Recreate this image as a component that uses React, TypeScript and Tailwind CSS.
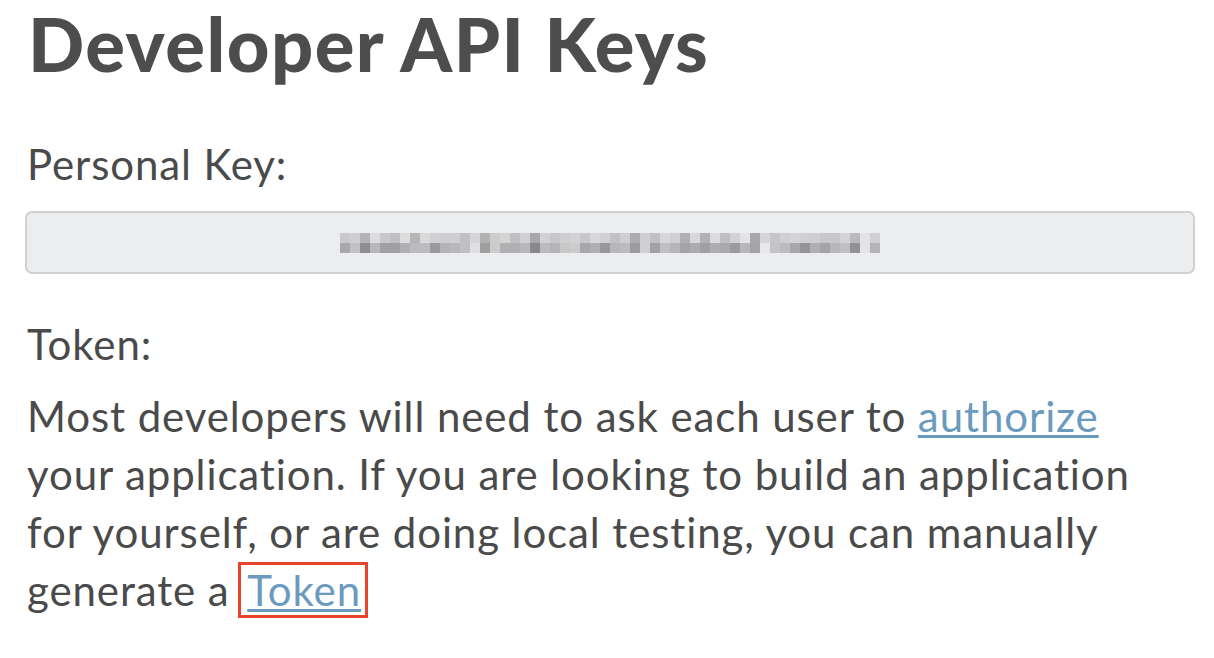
const topRow = [
  "#c9c9cb", "#cfcfd1", "#b2b3b4", "#dcdcde", "#c8c8ca", "#bfc0c1", "#dddddf", "#b5b5b6", "#dadadc",
  "#d0d0d2", "#cfcfd1", "#cfcfd1", "#c0c0c2", "#d6d6d8", "#b2b2b4", "#cccccd", "#d4d4d6", "#c0c0c2",
  "#d1d1d3", "#a8a8aa", "#d2d2d4", "#c8c8ca", "#cecfd0", "#d2d2d4", "#c8c8ca", "#d8d8da", "#d0d0d2",
  "#c2c2c4", "#cecfd0", "#acacae", "#cecfd0", "#c0c0c2", "#d8d8da", "#d0d0d2", "#b0b0b2", "#d8d8da",
  "#b2b2b4", "#dcdcde", "#c0c0c2", "#d2d2d4", "#e4e4e6", "#a8a8aa", "#d6d6d8", "#c6c6c8", "#d0d0d2",
  "#d4d4d6", "#d0d0d2", "#cfcfd1", "#c8c8ca", "#c8c8ca", "#d4d4d6", "#bababc", "#e4e4e6", "#d0d0d2",
];

const bottomRow = [
  "#a8a8aa", "#c2c2c4", "#8e8e90", "#b8b8ba", "#a0a0a2", "#a0a0a2", "#b0b0b2", "#bcbcbe", "#bcbcbe",
  "#9a9a9c", "#b4b4b6", "#b8b8ba", "#c0c0c2", "#e0e0e2", "#9e9ea0", "#cccccd", "#b0b0b2", "#b0b0b2",
  "#b8b8ba", "#88888a", "#bcbcbe", "#b4b4b6", "#c8c8ca", "#cccccd", "#a8a8aa", "#b0b0b2", "#98989a",
  "#b8b8ba", "#bcbcbe", "#9c9c9e", "#d0d0d2", "#a2a2a4", "#c0c0c2", "#b6b6b8", "#a4a4a6", "#acacae",
  "#a0a0a2", "#aeaeb0", "#aaaaac", "#9c9c9e", "#b8b8ba", "#a4a4a6", "#e8e8ea", "#c4c4c6", "#bcbcbe",
  "#a8a8aa", "#949496", "#b0b0b2", "#a4a4a6", "#b8b8ba", "#c0c0c2", "#929294", "#e4e4e6", "#b4b4b6",
];

function BlurredKey() {
  return (
    <div className="flex flex-col">
      <div className="flex">
        {topRow.map((c, i) => (
          <span key={i} className="block w-[10px] h-[10px]" style={{ backgroundColor: c }} />
        ))}
      </div>
      <div className="flex">
        {bottomRow.map((c, i) => (
          <span key={i} className="block w-[10px] h-[10px]" style={{ backgroundColor: c }} />
        ))}
      </div>
    </div>
  );
}

export default function App() {
  return (
    <div
      className="min-h-screen bg-white text-[#4a4a4a] pl-[25px] pr-[19px]"
      style={{ fontFamily: "Lato, 'Noto Sans', sans-serif" }}
    >
      {/* Heading */}
      <h1 className="pt-[7px] text-[74px] leading-[74px] font-black tracking-[1.5px] text-[#4d4d4d] pl-[3px]">
        Developer API Keys
      </h1>

      {/* Personal key */}
      <div className="mt-[54px] text-[42px] leading-[58px] tracking-[0.9px] pl-[2px]">Personal Key:</div>
      <div className="mt-[18px] h-[63px] rounded-[7px] border-2 border-[#d0d1d3] bg-[#ecedef] flex items-center justify-center">
        <BlurredKey />
      </div>

      {/* Token */}
      <div className="mt-[41px] text-[42px] leading-[58px] tracking-[0.9px] pl-[2px]">Token:</div>
      <p className="mt-[14px] text-[42px] leading-[58px] tracking-[0.9px] pl-[2px]">
        Most developers will need to ask each user to{" "}
        <a href="#" className="text-[#6a9bbf] underline decoration-[3px] underline-offset-[3px]">
          authorize
        </a>
        <br />
        your application. If you are looking to build an application
        <br />
        for yourself, or are doing local testing, you can manually
        <br />
        generate a{" "}
        <a
          href="#"
          className="text-[#6a9bbf] underline decoration-[3px] underline-offset-[3px] outline-[3px] outline-solid outline-[#e8432b] pl-[6px] pr-[4px]"
        >
          Token
        </a>
      </p>
    </div>
  );
}
